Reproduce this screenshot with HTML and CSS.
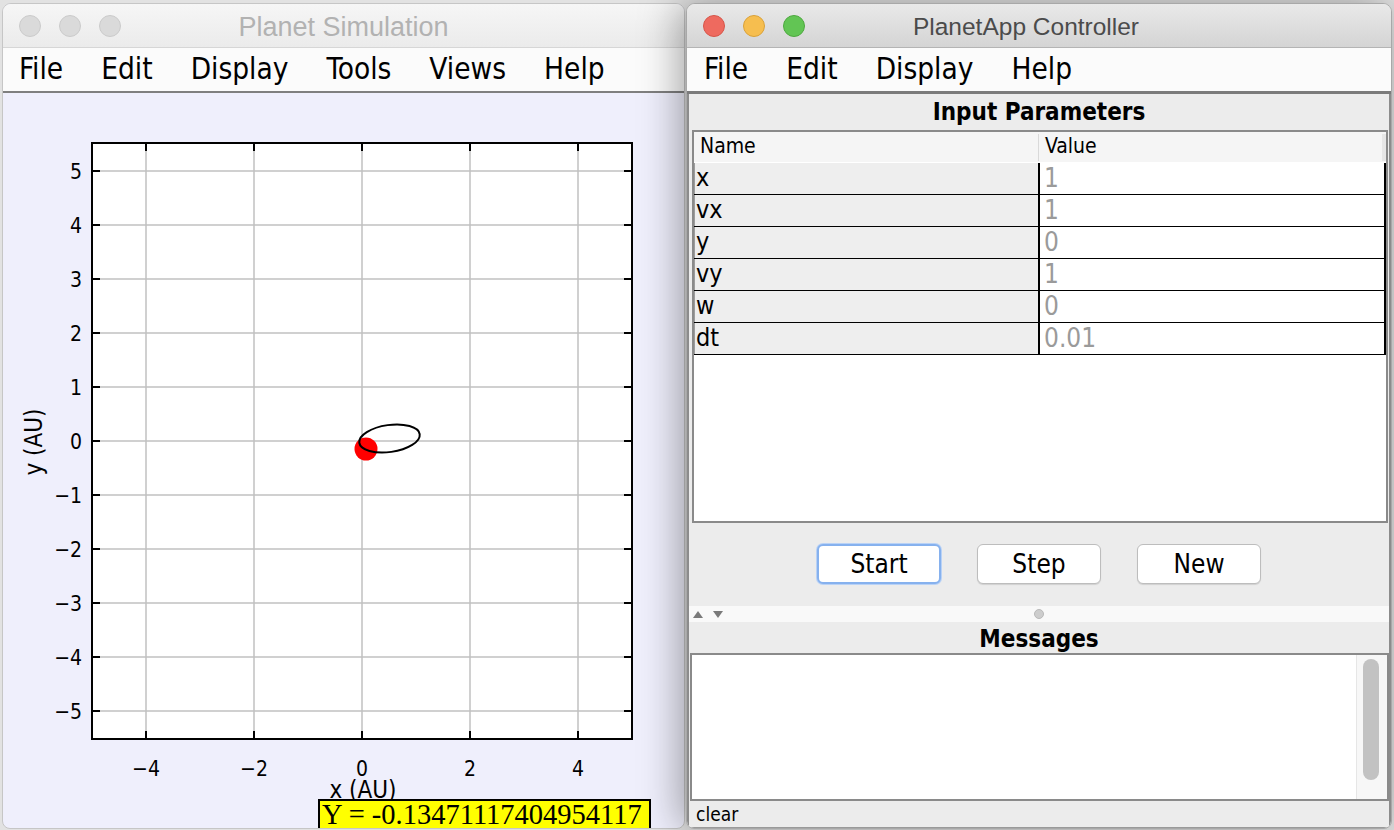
FILE: index.html
```html
<!DOCTYPE html>
<html>
<head>
<meta charset="utf-8">
<title>Planet Simulation</title>
<link rel="stylesheet" href="styles.css">
</head>
<body>
<div class="desktop">
  <div class="window sim">
    <div class="titlebar">
      <div class="lights">
        <span class="light off"></span><span class="light off"></span><span class="light off"></span>
      </div>
      <div class="title">Planet Simulation</div>
      <div></div>
    </div>
    <div class="menubar">
      <span>File</span><span>Edit</span><span>Display</span><span>Tools</span><span>Views</span><span>Help</span>
    </div>
    <div class="canvas">
      <svg class="plot" width="681" height="736" viewBox="3 92 681 736">
        <rect x="92" y="142" width="540" height="596" fill="#ffffff"/>
        <g stroke="#c0c0c0" stroke-width="1.5">
          <line x1="146" y1="142" x2="146" y2="738"/>
          <line x1="254" y1="142" x2="254" y2="738"/>
          <line x1="362" y1="142" x2="362" y2="738"/>
          <line x1="470" y1="142" x2="470" y2="738"/>
          <line x1="578" y1="142" x2="578" y2="738"/>
          <line x1="92" y1="170" x2="632" y2="170"/>
          <line x1="92" y1="224" x2="632" y2="224"/>
          <line x1="92" y1="278" x2="632" y2="278"/>
          <line x1="92" y1="332" x2="632" y2="332"/>
          <line x1="92" y1="386" x2="632" y2="386"/>
          <line x1="92" y1="440" x2="632" y2="440"/>
          <line x1="92" y1="494" x2="632" y2="494"/>
          <line x1="92" y1="548" x2="632" y2="548"/>
          <line x1="92" y1="602" x2="632" y2="602"/>
          <line x1="92" y1="656" x2="632" y2="656"/>
          <line x1="92" y1="710" x2="632" y2="710"/>
        </g>
        <g stroke="#000000" stroke-width="2">
          <path d="M146 142v8M254 142v8M362 142v8M470 142v8M578 142v8"/>
          <path d="M146 738v-8M254 738v-8M362 738v-8M470 738v-8M578 738v-8"/>
          <path d="M92 170h8M92 224h8M92 278h8M92 332h8M92 386h8M92 440h8M92 494h8M92 548h8M92 602h8M92 656h8M92 710h8"/>
          <path d="M632 170h-8M632 224h-8M632 278h-8M632 332h-8M632 386h-8M632 440h-8M632 494h-8M632 548h-8M632 602h-8M632 656h-8M632 710h-8"/>
        </g>
        <rect x="92" y="142" width="540" height="596" fill="none" stroke="#000000" stroke-width="2"/>
        <g class="ticklabel" text-anchor="end">
          <text x="82" y="177.5">5</text>
          <text x="82" y="231.5">4</text>
          <text x="82" y="285.5">3</text>
          <text x="82" y="339.5">2</text>
          <text x="82" y="393.5">1</text>
          <text x="82" y="447.5">0</text>
          <text x="82" y="501.5">−1</text>
          <text x="82" y="555.5">−2</text>
          <text x="82" y="609.5">−3</text>
          <text x="82" y="663.5">−4</text>
          <text x="82" y="717.5">−5</text>
        </g>
        <g class="ticklabel" text-anchor="middle">
          <text x="146" y="775">−4</text>
          <text x="254" y="775">−2</text>
          <text x="362" y="775">0</text>
          <text x="470" y="775">2</text>
          <text x="578" y="775">4</text>
        </g>
        <text class="axistitle" x="363" y="797" text-anchor="middle">x (AU)</text>
        <text class="axistitle" text-anchor="middle" transform="translate(42 441) rotate(-90)">y (AU)</text>
        <circle cx="366" cy="448" r="11.5" fill="#ff0000"/>
        <ellipse cx="389.5" cy="437.5" rx="30.5" ry="13.5" transform="rotate(-8 389.5 437.5)" fill="none" stroke="#000000" stroke-width="2"/>
        <rect x="319" y="799" width="331" height="29" fill="#ffff00" stroke="#000000" stroke-width="2"/>
        <text class="readout" x="322" y="823">Y = -0.13471117404954117</text>
      </svg>
    </div>
  </div>

  <div class="window ctrl">
    <div class="titlebar">
      <div class="lights">
        <span class="light red"></span><span class="light yellow"></span><span class="light green"></span>
      </div>
      <div class="title">PlanetApp Controller</div>
      <div></div>
    </div>
    <div class="menubar">
      <span>File</span><span>Edit</span><span>Display</span><span>Help</span>
    </div>
    <div class="body">
      <div class="section-title">Input Parameters</div>
      <div class="pane">
        <div class="thead">
          <div class="th">Name</div>
          <div class="th th-value">Value</div>
        </div>
        <div class="row"><div class="name">x</div><div class="value">1</div></div>
        <div class="row"><div class="name">vx</div><div class="value">1</div></div>
        <div class="row"><div class="name">y</div><div class="value">0</div></div>
        <div class="row"><div class="name">vy</div><div class="value">1</div></div>
        <div class="row"><div class="name">w</div><div class="value">0</div></div>
        <div class="row"><div class="name">dt</div><div class="value">0.01</div></div>
      </div>
      <div class="buttons">
        <button class="btn focused">Start</button>
        <button class="btn">Step</button>
        <button class="btn">New</button>
      </div>
      <div class="divider">
        <div class="arrows">
          <svg width="12" height="9" viewBox="0 0 12 9"><path d="M6 1L11 8H1Z" fill="#7a7a7a"/></svg>
          <svg width="12" height="9" viewBox="0 0 12 9"><path d="M1 1H11L6 8Z" fill="#7a7a7a"/></svg>
        </div>
        <span class="grip"></span>
        <div></div>
      </div>
      <div class="section-title msg-title">Messages</div>
      <div class="messages">
        <div class="msg-text"></div>
        <div class="scrollbar"><div class="thumb"></div></div>
      </div>
      <div class="clearbar">clear</div>
    </div>
  </div>
</div>
</body>
</html>
```

FILE: styles.css
```css
* { box-sizing: border-box; }
html, body { margin: 0; padding: 0; }
body {
  width: 1394px;
  height: 830px;
  overflow: hidden;
  background: #e2e2e2;
  font-family: "DejaVu Sans Condensed", "DejaVu Sans", sans-serif;
  color: #000;
}
.desktop {
  display: flex;
  gap: 1px;
  padding: 3px 2px 0 2px;
  height: 830px;
}
.window {
  display: flex;
  flex-direction: column;
  height: 826px;
  border-radius: 9px 9px 8px 8px;
  overflow: hidden;
}
.sim {
  width: 683px;
  border: 1px solid #c6c6c6;
  background: #efeffc;
}
.ctrl {
  width: 706px;
  border: 1px solid #a8a8a8;
  background: #ececec;
  box-shadow: -6px 0 40px rgba(0, 0, 0, 0.36);
}

/* title bars */
.titlebar {
  height: 44px;
  flex: none;
  display: grid;
  grid-template-columns: 1fr auto 1fr;
  align-items: center;
  padding-top: 3px;
  background: linear-gradient(#f6f6f6, #ebebeb);
  border-bottom: 1px solid #d6d6d6;
}
.ctrl .titlebar {
  background: linear-gradient(#e9e9e9, #d4d4d4);
  border-bottom: 1px solid #b4b4b4;
}
.lights {
  display: flex;
  gap: 18px;
  padding-left: 16px;
  margin-top: -3px;
}
.light {
  width: 22px;
  height: 22px;
  border-radius: 50%;
  border: 1px solid transparent;
}
.light.off { background: #dadada; border-color: #cbcbcb; }
.light.red { background: #ee6a5f; border-color: #d65549; }
.light.yellow { background: #f6be4f; border-color: #d9a139; }
.light.green { background: #62c554; border-color: #4da83f; }
.title {
  font-family: "Liberation Sans", Arial, sans-serif;
  font-size: 27px;
  color: #b2b2b2;
  white-space: nowrap;
}
.ctrl .title {
  font-size: 24.5px;
  color: #4b4b4b;
  margin-right: 26px;
}

/* menus */
.menubar {
  height: 45px;
  flex: none;
  display: flex;
  align-items: center;
  gap: 38px;
  padding: 0 0 1px 16px;
  background: #fbfbfb;
  border-bottom: 2px solid #7f7f7f;
  font-size: 29.5px;
}
.ctrl .menubar {
  height: 46px;
  padding-left: 17px;
  border-bottom: 3px solid #7b7b7b;
}

/* simulation canvas */
.canvas {
  flex: 1;
  overflow: hidden;
}
.plot { display: block; }
.ticklabel text {
  font-family: "DejaVu Sans Condensed", "DejaVu Sans", sans-serif;
  font-size: 21px;
  fill: #000;
}
.axistitle {
  font-family: "DejaVu Sans Condensed", "DejaVu Sans", sans-serif;
  font-size: 24px;
  fill: #000;
}
.readout {
  font-family: "Liberation Serif", "Times New Roman", serif;
  font-size: 28.5px;
  fill: #000;
}

/* controller body */
.body {
  flex: 1;
  display: flex;
  flex-direction: column;
  border-left: 2px solid #8c8c8c;
  border-right: 2px solid #8c8c8c;
  border-bottom: 2px solid #9a9a9a;
  background: #ececec;
}
.section-title {
  height: 36px;
  flex: none;
  display: flex;
  align-items: center;
  justify-content: center;
  font-weight: bold;
  font-size: 24px;
}
.pane {
  height: 393px;
  flex: none;
  margin: 0 1px 0 3px;
  border: 2px solid #8a8a8a;
  background: #ffffff;
}
.thead {
  height: 31px;
  display: grid;
  grid-template-columns: 344px 1fr;
  background: #f5f5f5;
  border-bottom: 1px solid #ffffff;
}
.th {
  display: flex;
  align-items: center;
  padding: 0 0 3px 6px;
  font-size: 21px;
}
.th-value {
  border-left: 1px solid #d9d9d9;
  margin: 2px 0;
  padding-left: 6px;
  border-right: 4px solid #e6e6e6;
}
.row {
  height: 32px;
  display: grid;
  grid-template-columns: 344px 1fr;
  border-bottom: 2px solid #000000;
}
.name {
  background: #eeeeee;
  border-left: 1px solid #9d9d9d;
  padding-left: 1px;
  font-size: 25px;
  line-height: 30px;
}
.value {
  background: #ffffff;
  border-left: 2px solid #000000;
  border-right: 2px solid #000000;
  padding-left: 4px;
  font-size: 26px;
  line-height: 31px;
  color: #9a9a9a;
}
.buttons {
  height: 83px;
  flex: none;
  display: flex;
  justify-content: center;
  align-items: flex-start;
  gap: 36px;
  padding-top: 21px;
}
.btn {
  width: 124px;
  height: 40px;
  background: #ffffff;
  border: 1px solid #bdbdbd;
  border-radius: 6px;
  box-shadow: 0 1px 1px rgba(0, 0, 0, 0.12);
  font-family: "DejaVu Sans Condensed", "DejaVu Sans", sans-serif;
  font-size: 26px;
  color: #000;
  padding: 0;
}
.btn.focused {
  border: 2px solid #86b1ee;
  box-shadow: 0 0 0 1px #b9d2f6;
}
.divider {
  height: 16px;
  flex: none;
  display: grid;
  grid-template-columns: 1fr auto 1fr;
  align-items: center;
  background: #f9f9f9;
}
.arrows {
  display: flex;
  gap: 8px;
  padding-left: 3px;
}
.arrows svg { display: block; }
.grip {
  width: 10px;
  height: 10px;
  border-radius: 50%;
  background: #cdcdcd;
  border: 1px solid #b9b9b9;
}
.msg-title {
  height: 31px;
  padding-top: 2px;
}
.messages {
  height: 148px;
  flex: none;
  display: flex;
  margin: 0 0 0 1px;
  border: 2px solid #8a8a8a;
  background: #ffffff;
}
.msg-text { flex: 1; }
.scrollbar {
  width: 31px;
  background: #f7f7f7;
  border-left: 1px solid #e6e6e6;
  padding: 4px 0 0 6px;
}
.thumb {
  width: 16px;
  height: 121px;
  border-radius: 8px;
  background: #c2c2c2;
}
.clearbar {
  flex: 1;
  padding-left: 7px;
  font-size: 19px;
  line-height: 26px;
}
```
